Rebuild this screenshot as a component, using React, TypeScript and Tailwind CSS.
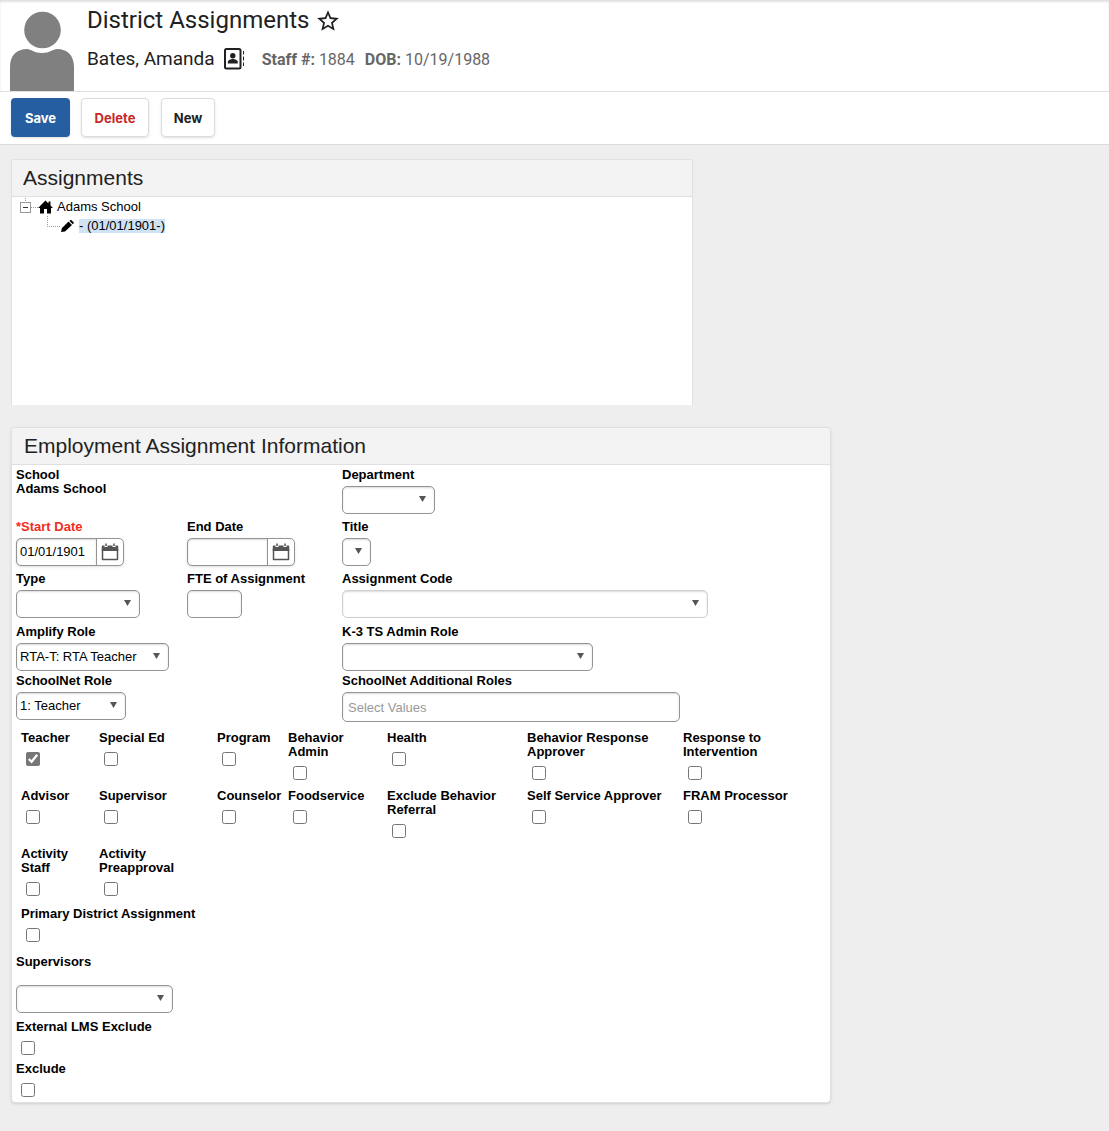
import React from "react";
import { MdStarBorder } from "react-icons/md";

type FieldProps = {
    id: string;
    label: string;
    children: React.ReactNode;
    className?: string;
}

type DropdownProps = {
    id: string;
    width: string;
    value?: string;
    border?: string;
}

type FlagType = {
    label: string;
    checked?: boolean;
}

const FLAGS: FlagType[] = [
    { label: "Teacher", checked: true },
    { label: "Special Ed" },
    { label: "Program" },
    { label: "Behavior\nAdmin" },
    { label: "Health" },
    { label: "Behavior Response\nApprover" },
    { label: "Response to\nIntervention" },
    { label: "Advisor" },
    { label: "Supervisor" },
    { label: "Counselor" },
    { label: "Foodservice" },
    { label: "Exclude Behavior\nReferral" },
    { label: "Self Service Approver" },
    { label: "FRAM Processor" },
    { label: "Activity\nStaff" },
    { label: "Activity\nPreapproval" },
];

const CONTROL = "bg-white border rounded-[5px] shadow-[inset_0_1px_2px_rgba(0,0,0,0.15)] text-black";

const Avatar = () => (
    <svg className="w-16 h-20 shrink-0" viewBox="0 0 64 80" fill="#808080" aria-hidden="true">
        <circle cx="32.5" cy="19" r="18.3" />
        <path d="M0 80V56C0 44 7 38 17 38C21 38 24 42 32 42S43 38 47 38C57 38 64 44 64 56V80Z" />
    </svg>
)

const ContactBook = () => (
    <svg className="w-[21px] h-[22px]" viewBox="0 0 21 22" fill="none" aria-hidden="true">
        <rect x="1" y="1" width="15.5" height="19.5" rx="1.5" stroke="#212121" strokeWidth="2" />
        <circle cx="8.800" cy="7.800" r="2.700" fill="#212121" />
        <path d="M3.800 15.500v-1.500c0-2 3-3 5-3s5 1 5 3v1.500z" fill="#212121" />
        <path d="M19.500 3v3.500M19.500 8.500v4M19.500 14.500v3.500" stroke="#1a1a5e" />
    </svg>
)

const Calendar = () => (
    <svg className="w-[18px] h-[18px]" viewBox="0 0 18 18" fill="none" aria-hidden="true">
        <path d="M1.500 6v10.500h15V6" stroke="#555" strokeWidth="1.500" strokeLinejoin="round" />
        <path d="M.75 8V3.500q0-1 1-1h1.750v1.500h3V2.500h5v1.500h3V2.500h1.750q1 0 1 1V8z" fill="#555" />
        <path d="M5 .5V3M13 .5V3" stroke="#555" strokeWidth="1.500" />
    </svg>
)

const Field: React.FC<FieldProps> = ({ id, label, children, className = "" }) => (
    <div className={`flex flex-col items-start gap-1 ${className}`}>
        <label htmlFor={id} className="font-bold"> {label} </label>
        {children}
    </div>
)

const Dropdown: React.FC<DropdownProps> = ({ id, width, value = "", border = "border-[#949494]" }) => (
    <div className={`relative h-7 ${width}`}>
        <select id={id} defaultValue={value} className={`appearance-none w-full h-full pl-[3px] pr-5 ${CONTROL} ${border}`}>
            <option value={value}>{value}</option>
        </select>
        <svg className="absolute right-[9px] top-[10px] w-[7px] h-[6px] pointer-events-none" viewBox="0 0 7 6" fill="#555">
            <path d="M0 0h7L3.500 6z" />
        </svg>
    </div>
)

const DateInput = ({ id, value = "", name }: { id: string, value?: string, name: string }) => (
    <div className="flex h-7 w-[108px] rounded-[5px] border border-[#949494] bg-white shadow-sm">
        <input id={id} defaultValue={value} className="min-w-0 flex-1 pl-[3px] rounded-l-[4px] shadow-[inset_0_1px_2px_rgba(0,0,0,0.15)]" />
        <button type="button" aria-label={name} className="flex w-[27px] items-center justify-center border-l border-[#949494]">
            <Calendar />
        </button>
    </div>
)

const Flag: React.FC<FlagType> = ({ label, checked }) => (
    <label className="flex flex-col items-start gap-[7px] font-bold whitespace-pre">
        {label}
        <input type="checkbox" defaultChecked={checked} className="ml-[5px] size-[14px] accent-[#767676]" />
    </label>
)

const App = () => {
    return (
        <div className="min-h-screen bg-[#eee] pb-6 font-['Liberation_Sans',Arial,sans-serif] text-[13px] leading-[14px] text-black">
            <header className="flex gap-[13px] border-b border-[#e0e0e0] bg-white pl-[10px] pt-[11px] font-[Roboto,sans-serif] text-[#212121] shadow-[inset_0_2px_2px_rgba(0,0,0,0.12)]">
                <Avatar />
                <div>
                    <div className="flex h-5 items-center gap-1.5">
                        <h1 className="text-2xl leading-5 pb-0.5"> District Assignments </h1>
                        <button type="button" aria-label="Add to favorites"><MdStarBorder size={26} /></button>
                    </div>
                    <div className="mt-[15px] flex items-center text-[19px] leading-6">
                        <span> Bates, Amanda </span>
                        <button type="button" aria-label="Contact details" className="ml-[9px] mr-[17px]"><ContactBook /></button>
                        <span className="pt-0.5 text-base text-[#666]"><b>Staff #:</b> 1884</span>
                        <span className="ml-[10px] pt-0.5 text-base text-[#666]"><b>DOB:</b> 10/19/1988</span>
                    </div>
                </div>
            </header>

            <div className="flex border-b border-[#dcdcdc] bg-white px-[11px] pt-1.5 pb-[7px] font-[Inter,sans-serif] text-[13px] font-bold">
                <button type="button" className="h-[39px] w-[59px] rounded bg-[#265fa1] text-white shadow-sm">Save</button>
                <button type="button" className="ml-[11px] h-[39px] w-[68px] rounded border border-[#dcdcdc] text-[#c62828] shadow-sm">Delete</button>
                <button type="button" className="ml-3 h-[39px] w-[54px] rounded border border-[#dcdcdc] text-[#212121] shadow-sm">New</button>
            </div>

            <main className="px-[11px] pt-[14px]">
                <section className="max-w-[682px] rounded-t border border-b-0 border-[#e0e0e0] bg-white">
                    <h2 className="rounded-t border-b border-[#e0e0e0] bg-[#f3f3f3] px-[11px] py-1.5 text-[21px] leading-6 text-[#222]">Assignments</h2>
                    <div className="h-[208px] pl-2 pt-px">
                        <div className="flex h-[18px] items-center">
                            <svg className="h-[18px] w-[18px]" viewBox="0 0 18 18" fill="none">
                                <path d="M5.500 0v4M11 9.500h7" stroke="#999" strokeDasharray="1 1" />
                                <rect x=".5" y="4.500" width="10" height="10" stroke="#999" />
                                <path d="M3 9.500h5" stroke="#333" />
                            </svg>
                            <svg className="h-[14px] w-[15px]" viewBox="0 0 15 14"><path d="M7.500 .5L0 8h2v5.500h4V9h3v4.500h4V8h2L12.500 5.500V1.500h-2v2z" /></svg>
                            <span className="ml-1">Adams School</span>
                        </div>
                        <div className="flex h-5 items-center pl-[27px]">
                            <svg className="h-5 w-[14px]" viewBox="0 0 14 20" fill="none"><path d="M.5 0v10.500H14" stroke="#999" strokeDasharray="1 1" /></svg>
                            <svg className="h-3 w-[13px]" viewBox="0 0 13 12"><path d="M0 12l1-4L7.500 1.500l3.500 3.500L4 11.500zM8.500 1l.7-.7q.6-.6 1.400 0l1.900 1.900q.6.600 0 1.300l-.7.7z" /></svg>
                            <span className="ml-[5px] bg-[#cfe3f5]">- (01/01/1901-)</span>
                        </div>
                    </div>
                </section>

                <form className="mt-[22px] max-w-[820px] rounded border border-[#e0e0e0] bg-white pb-[5px] shadow-sm">
                    <h2 className="rounded-t border-b border-[#e0e0e0] bg-[#f3f3f3] px-3 py-1.5 text-[21px] leading-6 text-[#222]">Employment Assignment Information</h2>
                    <div className="grid grid-cols-[171px_155px_1fr] gap-y-1.5 pl-1 pt-[3px]">
                        <div className="col-span-2 font-bold">
                            <p>School</p>
                            <p>Adams School</p>
                        </div>
                        <Field id="department" label="Department"><Dropdown id="department" width="w-[93px]" /></Field>
                        <Field id="start" label="*Start Date" className="[&>label]:text-[#f22c21]"><DateInput id="start" value="01/01/1901" name="Pick start date" /></Field>
                        <Field id="end" label="End Date"><DateInput id="end" name="Pick end date" /></Field>
                        <Field id="title" label="Title"><Dropdown id="title" width="w-[29px]" /></Field>
                        <Field id="type" label="Type"><Dropdown id="type" width="w-[124px]" /></Field>
                        <Field id="fte" label="FTE of Assignment"><input id="fte" className={`h-7 w-[55px] border-[#949494] ${CONTROL}`} /></Field>
                        <Field id="code" label="Assignment Code"><Dropdown id="code" width="w-[366px]" border="border-[#d0d0d0]" /></Field>
                    </div>
                    <div className="mt-[7px] grid grid-cols-[326px_1fr] gap-y-[3px] pl-1">
                        <Field id="amplify" label="Amplify Role"><Dropdown id="amplify" width="w-[153px]" value="RTA-T: RTA Teacher" /></Field>
                        <Field id="k3" label="K-3 TS Admin Role"><Dropdown id="k3" width="w-[251px]" /></Field>
                        <Field id="schoolnet" label="SchoolNet Role"><Dropdown id="schoolnet" width="w-[110px]" value="1: Teacher" /></Field>
                        <Field id="roles" label="SchoolNet Additional Roles">
                            <input id="roles" placeholder="Select Values" className={`h-[30px] w-[338px] border-[#949494] px-[5px] placeholder:text-[#999] ${CONTROL}`} />
                        </Field>
                    </div>

                    <div className="mt-[9px] grid grid-cols-[78px_118px_71px_99px_140px_156px_1fr] gap-y-[9px] pl-[9px]">
                        {FLAGS.map((item: FlagType, index: number) => (
                            <Flag {...item} key={index} />
                        ))}
                    </div>
                    <div className="mt-[11px] pl-[9px]">
                        <Flag label="Primary District Assignment" />
                    </div>

                    <div className="mt-[13px] flex flex-col items-start gap-[7px] pl-1">
                        <div>
                            <label htmlFor="supervisors" className="mb-4 block font-bold">Supervisors</label>
                            <Dropdown id="supervisors" width="w-[157px]" />
                        </div>
                        <Flag label="External LMS Exclude" />
                        <Flag label="Exclude" />
                    </div>
                </form>
            </main>
        </div>
    )
}

export default App;
